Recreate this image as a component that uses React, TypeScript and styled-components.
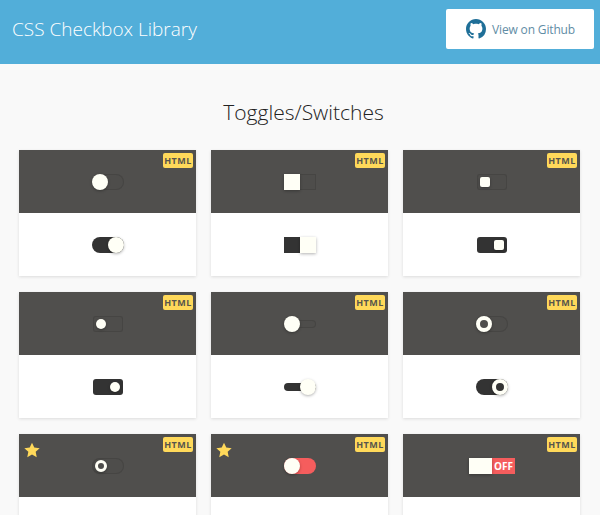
import React from 'react'
import styled, { createGlobalStyle } from 'styled-components'

type ToggleKind = {
  width: number
  height: number
  radius: number
  knob: number
  knobWide?: number
  knobRadius: number
  inset?: number
  ring?: number
  color?: string
  label?: boolean
}

const kinds: Record<string, ToggleKind> = {
  round: { width: 32, height: 16, radius: 8, knob: 16, knobRadius: 8 },
  square: { width: 32, height: 16, radius: 0, knob: 16, knobRadius: 0 },
  block: { width: 30, height: 16, radius: 3, knob: 10, knobRadius: 2, inset: 3 },
  dot: { width: 30, height: 16, radius: 3, knob: 10, knobRadius: 5, inset: 3 },
  thin: { width: 32, height: 8, radius: 4, knob: 16, knobRadius: 8 },
  ring: { width: 32, height: 16, radius: 8, knob: 16, knobRadius: 8, ring: 4 },
  smallRing: { width: 32, height: 16, radius: 8, knob: 12, knobRadius: 6, ring: 3, inset: 3 },
  red: { width: 32, height: 16, radius: 8, knob: 16, knobRadius: 8, color: '#f55d5d' },
  label: { width: 46, height: 16, radius: 0, knob: 16, knobWide: 23, knobRadius: 0, color: '#f55d5d', label: true },
}

const cards = [
  { kind: 'round' },
  { kind: 'square' },
  { kind: 'block' },
  { kind: 'dot' },
  { kind: 'thin' },
  { kind: 'ring' },
  { kind: 'smallRing', starred: true },
  { kind: 'red', starred: true },
  { kind: 'label' },
]

const Toggle: React.FC<{ kind: ToggleKind; on: boolean }> = ({ kind, on }) => (
  <Track
    $width={kind.width}
    $height={kind.height}
    $radius={kind.radius}
    $inset={kind.inset || 0}
    $on={on}
    $color={kind.color}
  >
    <Knob
      $size={kind.knob}
      $wide={kind.knobWide || kind.knob}
      $radius={kind.knobRadius}
      $ring={kind.ring}
    />
    {kind.label && !on && <SwitchLabel>OFF</SwitchLabel>}
  </Track>
)

const App: React.FC = () => (
  <>
    <GlobalStyle />
    <Header>
      <Title>CSS Checkbox Library</Title>
      <GithubLink href="#">
        <GithubMark viewBox="0 0 16 16">
          <path d="M8 0C3.58 0 0 3.58 0 8c0 3.54 2.29 6.53 5.47 7.59.4.07.55-.17.55-.38 0-.19-.01-.82-.01-1.49-2.01.37-2.53-.49-2.69-.94-.09-.23-.48-.94-.82-1.13-.28-.15-.68-.52-.01-.53.63-.01 1.08.58 1.23.82.72 1.21 1.87.87 2.33.66.07-.52.28-.87.51-1.07-1.78-.2-3.64-.89-3.64-3.95 0-.87.31-1.59.82-2.15-.08-.2-.36-1.02.08-2.12 0 0 .67-.21 2.2.82.64-.18 1.32-.27 2-.27.68 0 1.36.09 2 .27 1.53-1.04 2.2-.82 2.2-.82.44 1.1.16 1.92.08 2.12.51.56.82 1.27.82 2.15 0 3.07-1.87 3.75-3.65 3.95.29.25.54.73.54 1.48 0 1.07-.01 1.93-.01 2.2 0 .21.15.46.55.38A8.013 8.013 0 0016 8c0-4.42-3.58-8-8-8z" />
        </GithubMark>
        View on Github
      </GithubLink>
    </Header>
    <Main>
      <Heading>Toggles/Switches</Heading>
      <Grid>
        {cards.map(({ kind, starred }) => (
          <Card key={kind}>
            <Panel $dark>
              {starred && (
                <Star viewBox="0 0 24 24">
                  <polygon points="12,1 15.4,8.4 23.5,9.3 17.5,14.8 19.1,22.8 12,18.8 4.9,22.8 6.5,14.8 0.5,9.3 8.6,8.4" />
                </Star>
              )}
              <Badge>HTML</Badge>
              <Toggle kind={kinds[kind]} on={false} />
            </Panel>
            <Panel>
              <Toggle kind={kinds[kind]} on />
            </Panel>
          </Card>
        ))}
      </Grid>
    </Main>
  </>
)

const GlobalStyle = createGlobalStyle`
  html, body {
    margin: 0;
    overflow: hidden;
    background: #f9f9f9;
    font-family: "Open Sans", "Noto Sans", sans-serif;
  }
`

const Header = styled.header`
  display: flex;
  justify-content: space-between;
  height: 64px;
  padding: 9px 6px 0 12px;
  box-sizing: border-box;
  background: #52aed9;
`

const Title = styled.h1`
  margin: 7px 0 0;
  font-size: 19px;
  line-height: 27px;
  font-weight: 300;
  color: #fff;
`

const GithubLink = styled.a`
  display: flex;
  align-items: center;
  gap: 6px;
  width: 148px;
  height: 40px;
  padding-left: 20px;
  box-sizing: border-box;
  border-radius: 2px;
  background: #fff;
  color: #5f8da5;
  font-size: 12px;
  letter-spacing: -0.15px;
  text-decoration: none;
`

const GithubMark = styled.svg`
  width: 20px;
  height: 20px;
  fill: #1f6f98;
`

const Main = styled.main`
  padding: 33px 20px 0 19px;
`

const Heading = styled.h2`
  margin: 0 0 22px 8px;
  text-align: center;
  font-size: 21px;
  line-height: 31px;
  font-weight: 300;
  color: #222;
`

const Grid = styled.div`
  display: grid;
  grid-template-columns: repeat(3, 177px);
  gap: 16px 15px;
`

const Card = styled.article`
  height: 126px;
  display: flex;
  flex-direction: column;
  background: #fff;
  box-shadow: 0 1px 3px rgba(0, 0, 0, 0.12);
`

const Panel = styled.div<{ $dark?: boolean }>`
  position: relative;
  height: 63px;
  padding: 1px 0 0 1px;
  box-sizing: border-box;
  display: flex;
  align-items: center;
  justify-content: center;
  background: ${(props) => (props.$dark ? '#504f4d' : '#fff')};
`

const Badge = styled.span`
  position: absolute;
  top: 3px;
  right: 3px;
  width: 30px;
  height: 15px;
  border-radius: 2px;
  background: #ffd95a;
  color: #57554c;
  font-size: 9px;
  font-weight: 700;
  letter-spacing: 0.5px;
  line-height: 15px;
  text-align: center;
`

const Star = styled.svg`
  position: absolute;
  top: 8px;
  left: 5px;
  width: 16px;
  height: 16px;
  fill: #ffd95a;
`

const Track = styled.div<{
  $width: number
  $height: number
  $radius: number
  $inset: number
  $on: boolean
  $color?: string
}>`
  display: flex;
  align-items: center;
  justify-content: ${(props) => (props.$on ? 'flex-end' : 'flex-start')};
  width: ${(props) => props.$width}px;
  height: ${(props) => props.$height}px;
  padding: 0 ${(props) => props.$inset}px;
  box-sizing: border-box;
  border-radius: ${(props) => props.$radius}px;
  background: ${(props) => props.$color || (props.$on ? '#333' : '#4e4d4b')};
  box-shadow: ${(props) => (props.$color || props.$on ? 'none' : 'inset 0 0 0 1px #464543')};
`

const Knob = styled.span<{ $size: number; $wide: number; $radius: number; $ring?: number }>`
  flex-shrink: 0;
  width: ${(props) => props.$wide}px;
  height: ${(props) => props.$size}px;
  box-sizing: border-box;
  border-radius: ${(props) => props.$radius}px;
  background: ${(props) => (props.$ring ? 'transparent' : '#fffff6')};
  border: ${(props) => (props.$ring ? `${props.$ring}px solid #fffff6` : 'none')};
  box-shadow: 0 1px 3px rgba(0, 0, 0, 0.3);
`

const SwitchLabel = styled.span`
  flex: 1;
  text-align: center;
  color: #fff;
  font-size: 10px;
  font-weight: 700;
  line-height: 16px;
`

export default App
